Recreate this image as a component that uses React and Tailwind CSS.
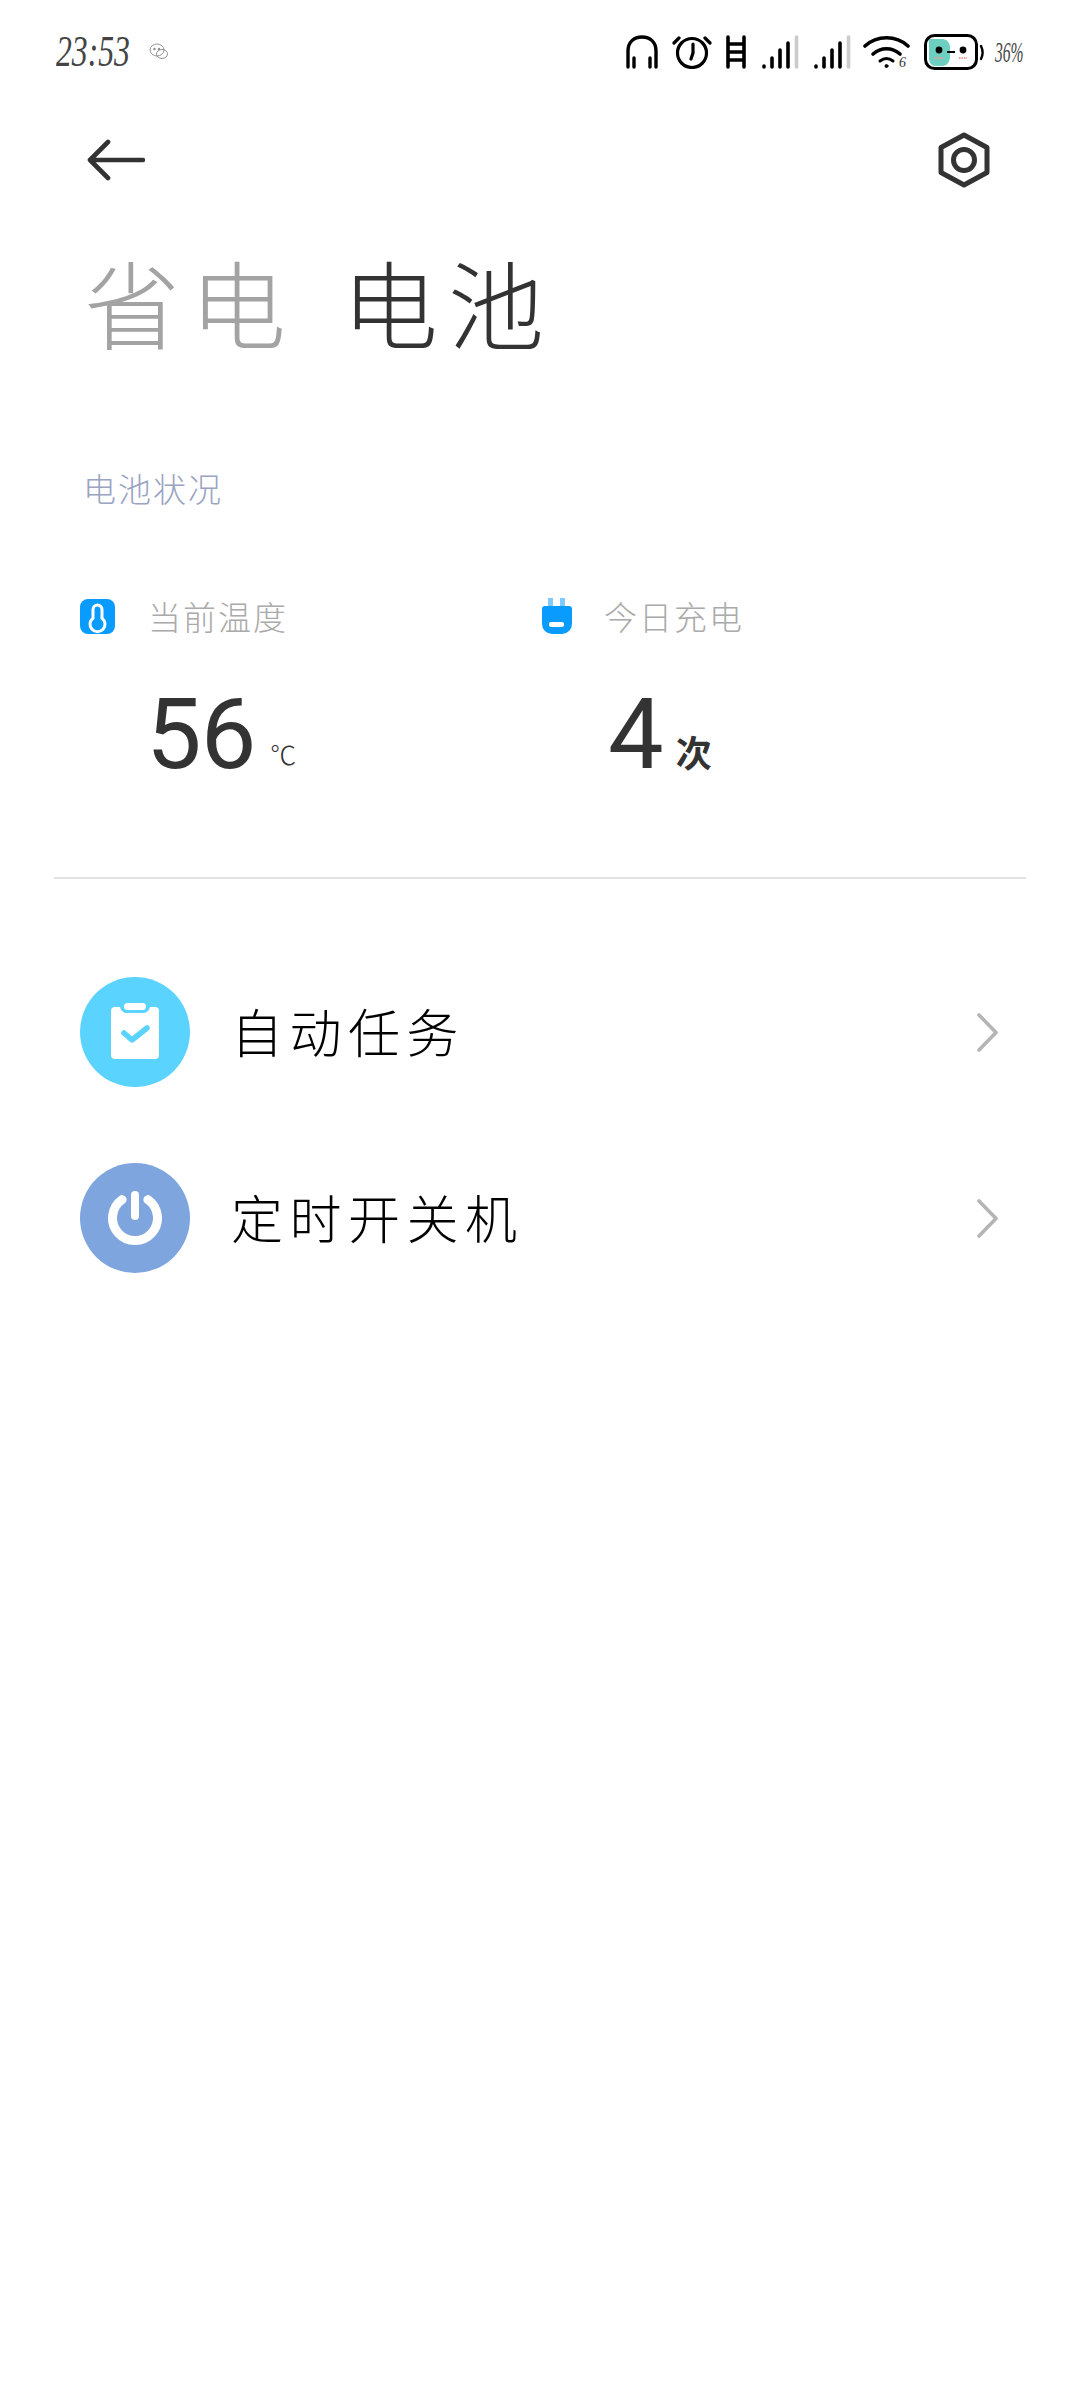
import React from "react";

const cjk = "font-['Noto_Sans_CJK_SC','Noto_Sans',sans-serif]";

const StatusIcons = () => (
  <div className="flex items-center">
    {/* headphones */}
    <svg width="32" height="34" viewBox="0 0 32 34" fill="none" stroke="#000" strokeWidth="3.4" strokeLinecap="round">
      <path d="M2 32V16C2 7 8 2 16 2s14 5 14 14v16" />
      <path d="M8 23v9M24 23v9" />
    </svg>
    {/* alarm */}
    <svg className="ml-[14px]" width="40" height="34" viewBox="0 0 40 34" fill="none" stroke="#000" strokeWidth="3.2" strokeLinecap="round">
      <circle cx="20" cy="18" r="14.5" />
      <path d="M21 9v9l-2 6M2 8l5-5M38 8l-5-5" />
    </svg>
    {/* ladder / hd */}
    <svg className="ml-[14px]" width="20" height="34" viewBox="0 0 20 34" fill="none" stroke="#000" strokeWidth="3.4" strokeLinecap="round">
      <path d="M2 2v30M18 2v30" strokeWidth="3.6" />
      <path d="M2 9h16M2 17h16M2 25h16" strokeLinecap="butt" />
    </svg>
    {/* sim 1 */}
    <svg className="ml-[16px]" width="37" height="34" viewBox="0 0 37 34" fill="none" strokeWidth="3.6" strokeLinecap="round">
      <path d="M2 31v1M10 23v9M18 15v17M26 8v24" stroke="#000" />
      <path d="M34.500 2v30" stroke="#ccc" />
    </svg>
    {/* sim 2 */}
    <svg className="ml-[15px]" width="37" height="34" viewBox="0 0 37 34" fill="none" strokeWidth="3.6" strokeLinecap="round">
      <path d="M2 31v1M10 23v9M18 15v17M26 8v24" stroke="#000" />
      <path d="M34.500 2v30" stroke="#ccc" />
    </svg>
    {/* wifi with the 6 */}
    <div className="relative ml-[12px] w-[47px] h-[36px]">
      <svg width="47" height="34" viewBox="0 0 47 34" fill="none" stroke="#000" strokeWidth="3.6" strokeLinecap="round">
        <path d="M2 12C14 1 33 1 45 12" />
        <path d="M10 20c8-7 19-7 27 0" />
        <path d="M17 27c4-3 9-3 13 0" strokeWidth="3" />
        <circle cx="23.500" cy="32" r="1.500" fill="#000" strokeWidth="1" />
      </svg>
      <span className="absolute left-[36px] top-[20px] text-[14px] leading-[18px] italic text-[#333] font-['Liberation_Serif',serif]">6</span>
    </div>
    {/* battery face */}
    <svg className="ml-[14px]" width="61" height="36" viewBox="0 0 61 36" fill="none">
      <path d="M5 5h13c5 0 8 4 8 9v8c0 6-3 10-8 10H11c-3 0-6-3-6-8z" fill="#6ccfc0" />
      <rect x="1.500" y="1.500" width="51" height="33" rx="9" stroke="#000" strokeWidth="3" />
      <circle cx="15" cy="16" r="3.400" fill="#000" />
      <circle cx="39" cy="16" r="3.400" fill="#000" />
      <path d="M23 18h8" stroke="#000" strokeWidth="2" />
      <path d="M11 24h8M35 24h8" stroke="#f29a9a" strokeWidth="2" strokeDasharray="1.500 1" />
      <path d="M57 12c2 4 2 9 0 13" stroke="#000" strokeWidth="2.400" strokeLinecap="round" />
    </svg>
    <div className="ml-[10px] w-[30px] h-[36px]">
      <span className="block origin-left scale-x-[0.52] whitespace-nowrap text-[30px] leading-[36px] italic text-[#444] font-['Liberation_Serif',serif]">
        36%
      </span>
    </div>
  </div>
);

const TopBar = () => (
  <div className="flex items-center justify-between h-[112px] pl-[87px] pr-[90px]">
    <svg width="58" height="42" viewBox="0 0 58 42" fill="none" stroke="#333" strokeWidth="4.600" strokeLinecap="round" strokeLinejoin="round">
      <path d="M3 21h53M21 3 3 21l18 18" />
    </svg>
    <svg width="52" height="56" viewBox="0 0 52 56" fill="none" stroke="#333" strokeWidth="5" strokeLinejoin="round">
      <path d="M26 3 49 15.500v25L26 53 3 40.500v-25z" />
      <circle cx="26" cy="28" r="10.500" />
    </svg>
  </div>
);

const Thermometer = () => (
  <svg width="35" height="35" viewBox="0 0 35 35">
    <rect width="35" height="35" rx="8" fill="#0a9bff" />
    <path d="M17.500 6a4.500 4.500 0 0 1 4.500 4.500v8.700a7.500 7.500 0 1 1-9 0v-8.700A4.500 4.500 0 0 1 17.500 6z" fill="none" stroke="#fff" strokeWidth="3" />
  </svg>
);

const Plug = () => (
  <svg width="30" height="36" viewBox="0 0 30 36">
    <path d="M6 0h5v9H6zM18 0h5v9h-5z" fill="#7fcbff" />
    <path d="M3 8h24a3 3 0 0 1 3 3v15a10 10 0 0 1-10 10H10A10 10 0 0 1 0 26V11a3 3 0 0 1 3-3z" fill="#0a9bff" />
    <rect x="7" y="24" width="15" height="5" rx="2" fill="#fff" />
  </svg>
);

const Chevron = () => (
  <svg className="ml-auto" width="21" height="39" viewBox="0 0 21 39" fill="none" stroke="#b5b5b5" strokeWidth="3.600" strokeLinecap="round" strokeLinejoin="round">
    <path d="M2 2l17 17.500L2 37" />
  </svg>
);

const Stat = ({ icon, label, value, unit, labelGap, valueIndent, unitClass }) => (
  <div className="flex flex-col">
    <div className="flex items-center h-[36px]">
      {icon}
      <span className={`${cjk} ${labelGap} text-[33px] leading-[36px] font-light tracking-[2px] text-[#aaa]`}>
        {label}
      </span>
    </div>
    <div className={`${valueIndent} mt-[55px] flex items-end h-[90px]`}>
      <span className="font-['Roboto',sans-serif] text-[99px] leading-[90px] tracking-[-1px] text-[#333]">{value}</span>
      <span className={unitClass}>{unit}</span>
    </div>
  </div>
);

const MenuRow = ({ color, icon, label }) => (
  <div className="flex items-center h-[110px] pl-[80px] pr-[82px]">
    <div className={`flex items-center justify-center w-[110px] h-[110px] rounded-full ${color}`}>{icon}</div>
    <span className={`${cjk} ml-[41px] mb-[3px] text-[52px] leading-[60px] font-light tracking-[6.500px] text-black`}>{label}</span>
    <Chevron />
  </div>
);

const App = () => (
  <div className="w-[1080px] h-[2400px] bg-white overflow-hidden">
    <div className="flex items-center justify-between h-[104px] pl-[56px] pr-[55px]">
      <div className="flex items-center">
        <div className="w-[76px] h-[44px]">
          <span className="block origin-left scale-x-[0.72] whitespace-nowrap font-['Liberation_Serif',serif] italic text-[44px] leading-[44px] text-[#444]">
            23:53
          </span>
        </div>
        <svg className="ml-[17px]" width="19" height="18" viewBox="0 0 19 18" fill="none" stroke="#888" strokeWidth="0.900">
          <ellipse cx="8" cy="7" rx="7" ry="6" />
          <ellipse cx="13" cy="11" rx="5.500" ry="4.500" />
          <circle cx="5.500" cy="6" r="0.800" fill="#555" />
          <circle cx="10" cy="6" r="0.800" fill="#555" />
        </svg>
      </div>
      <StatusIcons />
    </div>

    <TopBar />

    <div className={`${cjk} flex gap-[46px] h-[114px] mt-[28px] pl-[84px] text-[96px] leading-[114px] font-light tracking-[10px]`}>
      <span className="text-[#a3a3a3]">省电</span>
      <span className="text-[#333]">电池</span>
    </div>

    <div className={`${cjk} mt-[110px] pl-[83px] text-[33px] leading-[40px] font-light tracking-[2px] text-[#99a3c2]`}>
      电池状况
    </div>

    <div className="grid grid-cols-[462px_1fr] mt-[90px] pl-[80px]">
      <Stat
        icon={<Thermometer />}
        label="当前温度"
        labelGap="ml-[33px]"
        value="56"
        valueIndent="ml-[66px]"
        unit="℃"
        unitClass={`${cjk} ml-[15px] mb-[7px] text-[26px] leading-[36px] font-light text-[#333]`}
      />
      <Stat
        icon={<Plug />}
        label="今日充电"
        labelGap="ml-[32px]"
        value="4"
        valueIndent="ml-[66px]"
        unit="次"
        unitClass={`${cjk} ml-[13px] mb-[6px] text-[36px] leading-[44px] font-bold text-[#333]`}
      />
    </div>

    <div className="mx-[54px] mt-[98px] h-[2px] bg-[#e2e2e2]" />

    <div className="flex flex-col gap-[76px] mt-[98px]">
      <MenuRow
        color="bg-[#5bd3ff]"
        label="自动任务"
        icon={
          <svg className="mb-[3px]" width="48" height="56" viewBox="0 0 48 56">
            <path d="M4 4h5c1 4 4 6 7 6h16c3 0 6-2 7-6h5a4 4 0 0 1 4 4v44a4 4 0 0 1-4 4H4a4 4 0 0 1-4-4V8a4 4 0 0 1 4-4z" fill="#fff" />
            <rect x="13" y="0" width="22" height="7" rx="3.500" fill="#fff" />
            <path d="M13 30l8 7 15-12" fill="none" stroke="#5bd3ff" strokeWidth="5.500" strokeLinecap="round" strokeLinejoin="round" />
          </svg>
        }
      />
      <MenuRow
        color="bg-[#7ea5de]"
        label="定时开关机"
        icon={
          <svg width="56" height="60" viewBox="0 0 56 60" fill="none" stroke="#fff" strokeLinecap="round">
            <path d="M15.100 11.600A22.500 22.500 0 1 0 40.900 11.600" strokeWidth="9" />
            <path d="M28 7v21" strokeWidth="8" />
          </svg>
        }
      />
    </div>
  </div>
);

export default App;
